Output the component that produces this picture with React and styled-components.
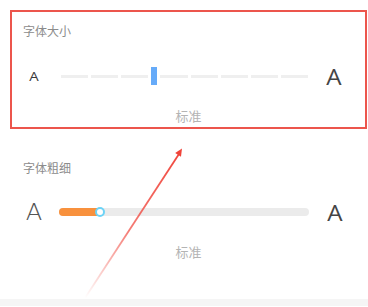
import React from 'react'
import styled, { createGlobalStyle } from 'styled-components'

const GlobalStyle = createGlobalStyle`
  html, body {
    margin: 0;
    padding: 0;
    background: #fff;
  }
`

const Page = styled.div`
  position: relative;
  width: 368px;
  height: 307px;
  overflow: hidden;
  background: #fff;
  font-family: "Noto Sans CJK SC", "Noto Sans", sans-serif;
`

const Panel = styled.section`
  margin: ${p => p.$top}px 1px 0 10px;
  border: 2px solid ${p => (p.$marked ? '#ec554c' : 'transparent')};
  padding: 11px 0 3px 11px;
`

const Title = styled.div`
  font-size: 12px;
  line-height: 16px;
  color: #8c8c8c;
`

const Row = styled.div`
  display: flex;
  align-items: center;
  height: 24px;
  margin: ${p => p.$gap}px 0 20px -11px;
`

const Glyph = styled.span`
  display: flex;
  justify-content: center;
  width: ${p => p.$w}px;
  font-family: ${p => (p.$thin ? '"DejaVu Sans"' : '"Open Sans"')}, sans-serif;
  font-size: ${p => p.$size}px;
  font-weight: ${p => p.$weight};
  color: ${p => p.$color || '#3a3a3a'};
  line-height: 24px;
  transform: scaleX(${p => p.$sx || 1});
`

const Steps = styled.div`
  display: flex;
  align-items: center;
  gap: 3px;
  width: 247px;
  margin-left: 5px;
`

const Step = styled.div`
  flex: 1;
  height: 3px;
  background: #efefef;
`

const Knob = styled.div`
  width: 6px;
  height: 18px;
  background: #66abf9;
`

const Bar = styled.div`
  position: relative;
  width: 250px;
  height: 8px;
  margin-left: 3px;
  border-radius: 4px;
  background: #ebebeb;
`

const Fill = styled.div`
  height: 100%;
  border-radius: 4px 0 0 4px;
  background: #f8913d;
`

const Dot = styled.div`
  position: absolute;
  top: 50%;
  width: 6px;
  height: 6px;
  margin: -5px 0 0 -5px;
  border: 2px solid #6dd3f6;
  border-radius: 50%;
  background: #fff;
`

const Caption = styled.div`
  margin-left: -11px;
  text-align: center;
  font-size: 13px;
  line-height: 16px;
  color: #b4b4b4;
`

const Footer = styled.div`
  margin-top: 34px;
  height: 7px;
  background: #f5f5f5;
`

const Arrow = styled.svg`
  position: absolute;
  left: 0;
  top: 0;
  pointer-events: none;
`

function SizeSlider() {
  const steps = [0, 1, 2, 3, 4, 5, 6, 7]
  return (
    <Steps>
      {steps.map(i => (
        <React.Fragment key={i}>
          {i === 3 && <Knob />}
          <Step />
        </React.Fragment>
      ))}
    </Steps>
  )
}

function WeightSlider({ value }) {
  return (
    <Bar>
      <Fill style={{ width: value + '%' }} />
      <Dot style={{ left: value + '%' }} />
    </Bar>
  )
}

export default function App() {
  return (
    <Page>
      <GlobalStyle />
      <Panel $top={10} $marked>
        <Title>字体大小</Title>
        <Row $gap={25}>
          <Glyph $w={44} $size={13} $weight={400} $sx={1.15}>A</Glyph>
          <SizeSlider />
          <Glyph $w={52} $size={22} $weight={400} $color="#444" $sx={1.1}>A</Glyph>
        </Row>
        <Caption>标准</Caption>
      </Panel>

      <Panel $top={18}>
        <Title>字体粗细</Title>
        <Row $gap={24}>
          <Glyph $w={44} $size={23} $weight={200} $thin $color="#555" $sx={1.05}>A</Glyph>
          <WeightSlider value={16.4} />
          <Glyph $w={52} $size={22} $weight={500} $color="#444" $sx={1.1}>A</Glyph>
        </Row>
        <Caption>标准</Caption>
      </Panel>

      <Footer />

      <Arrow width="368" height="307" viewBox="0 0 368 307">
        <defs>
          <linearGradient id="tail" gradientUnits="userSpaceOnUse" x1="85" y1="298" x2="182" y2="149">
            <stop offset="0" stopColor="#f0443a" stopOpacity="0" />
            <stop offset="0.45" stopColor="#f0443a" stopOpacity="0.7" />
            <stop offset="1" stopColor="#f0443a" stopOpacity="1" />
          </linearGradient>
        </defs>
        <line x1="85" y1="298" x2="179" y2="154" stroke="url(#tail)" strokeWidth="1.8" />
        <polygon points="182,148.5 181,156.8 175.2,153.1" fill="#f0443a" />
      </Arrow>
    </Page>
  )
}
